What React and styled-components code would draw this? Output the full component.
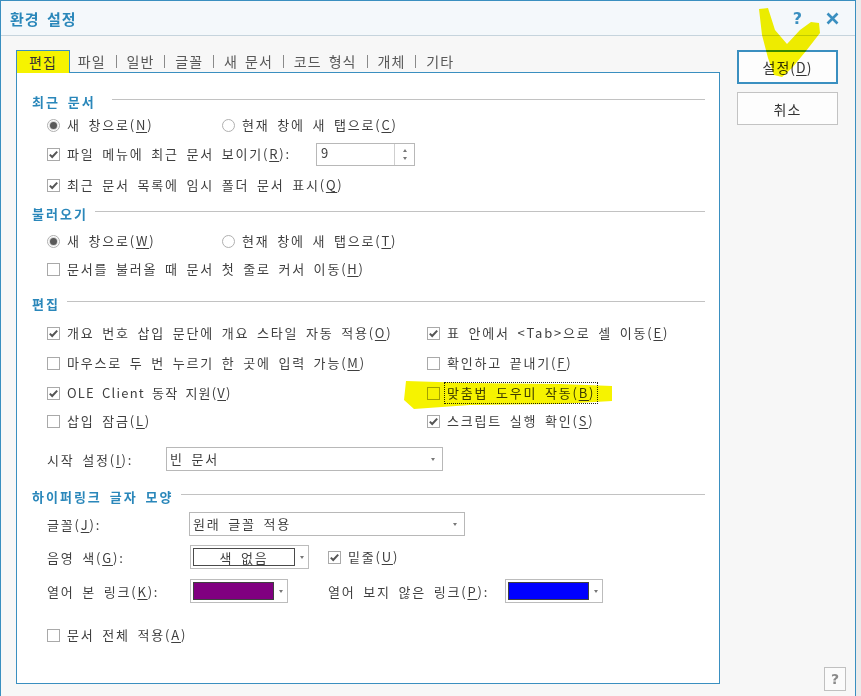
import React from 'react'
import styled, { createGlobalStyle } from 'styled-components'

const BLUE = '#3a8fc0'
const HEAD = '#2a87ba'
const TEXT = '#3f3f3f'

const GlobalStyle = createGlobalStyle`
  html, body { margin: 0; padding: 0; background: #ebebeb; }
  body { font-family: "Noto Sans CJK KR", "Noto Sans", sans-serif; }
  #root { width: 861px; height: 696px; overflow: hidden; }
  u { text-underline-offset: 2px; }
`

export default function App() {
    return (
        <>
            <GlobalStyle />
            <Dialog>
                <TitleBar>
                    <Title>환경 설정</Title>
                    <TitleIcons>
                        <HelpIcon>?</HelpIcon>
                        <svg width="13" height="13" viewBox="0 0 13 13">
                            <path d="M1.5 1.5 L11.5 11.5 M11.5 1.5 L1.5 11.5" stroke={BLUE} strokeWidth="2.6" />
                        </svg>
                    </TitleIcons>
                </TitleBar>
                <Main>
                    <LeftColumn>
                        <TabRow>
                            <SelectedTab>편집</SelectedTab>
                            <TabItem first>파일</TabItem><Sep />
                            <TabItem>일반</TabItem><Sep />
                            <TabItem>글꼴</TabItem><Sep />
                            <TabItem>새 문서</TabItem><Sep />
                            <TabItem>코드 형식</TabItem><Sep />
                            <TabItem>개체</TabItem><Sep />
                            <TabItem>기타</TabItem>
                        </TabRow>
                        <Panel>
                            <SectionHeader mt={0} gap={16}>최근 문서</SectionHeader>
                            <Row mt={0}>
                                <Option width={175}><Radio checked /><Label>새 창으로(<u>N</u>)</Label></Option>
                                <Option><Radio /><Label>현재 창에 새 탭으로(<u>C</u>)</Label></Option>
                            </Row>
                            <Row mt={5}>
                                <Option width={269}><Check checked /><Label>파일 메뉴에 최근 문서 보이기(<u>R</u>):</Label></Option>
                                <Spin>
                                    <SpinValue>9</SpinValue>
                                    <SpinButtons><ArrowUp /><ArrowDown /></SpinButtons>
                                </Spin>
                            </Row>
                            <Row mt={7}>
                                <Option><Check checked /><Label>최근 문서 목록에 임시 폴더 문서 표시(<u>Q</u>)</Label></Option>
                            </Row>

                            <SectionHeader mt={4}>불러오기</SectionHeader>
                            <Row mt={4}>
                                <Option width={175}><Radio checked /><Label>새 창으로(<u>W</u>)</Label></Option>
                                <Option><Radio /><Label>현재 창에 새 탭으로(<u>T</u>)</Label></Option>
                            </Row>
                            <Row mt={4}>
                                <Option><Check /><Label>문서를 불러올 때 문서 첫 줄로 커서 이동(<u>H</u>)</Label></Option>
                            </Row>

                            <SectionHeader mt={10}>편집</SectionHeader>
                            <Row mt={6}>
                                <Option width={380}><Check checked /><Label>개요 번호 삽입 문단에 개요 스타일 자동 적용(<u>O</u>)</Label></Option>
                                <Option><Check checked /><Label>표 안에서 &lt;Tab&gt;으로 셀 이동(<u>E</u>)</Label></Option>
                            </Row>
                            <Row mt={6}>
                                <Option width={380}><Check /><Label>마우스로 두 번 누르기 한 곳에 입력 가능(<u>M</u>)</Label></Option>
                                <Option><Check /><Label>확인하고 끝내기(<u>F</u>)</Label></Option>
                            </Row>
                            <Row mt={6}>
                                <Option width={380}><Check checked /><Label latin>OLE Client 동작 지원(<u>V</u>)</Label></Option>
                                <Option><Check /><Label focused>맞춤법 도우미 작동(<u>B</u>)</Label></Option>
                            </Row>
                            <Row mt={4}>
                                <Option width={380}><Check /><Label>삽입 잠금(<u>L</u>)</Label></Option>
                                <Option><Check checked /><Label>스크립트 실행 확인(<u>S</u>)</Label></Option>
                            </Row>
                            <Row mt={14}>
                                <FieldLabel width={119}>시작 설정(<u>I</u>):</FieldLabel>
                                <Select width={277}>빈 문서<SelectArrow /></Select>
                            </Row>

                            <SectionHeader mt={13}>하이퍼링크 글자 모양</SectionHeader>
                            <Row mt={4}>
                                <FieldLabel width={142}>글꼴(<u>J</u>):</FieldLabel>
                                <Select width={276}>원래 글꼴 적용<SelectArrow /></Select>
                            </Row>
                            <Row mt={9}>
                                <FieldGroup>
                                    <FieldLabel width={143}>음영 색(<u>G</u>):</FieldLabel>
                                    <ColorPicker width={119}>
                                        <NoColor>색 없음</NoColor>
                                        <PickerArrow><SelectArrow /></PickerArrow>
                                    </ColorPicker>
                                </FieldGroup>
                                <Option><Check checked /><Label>밑줄(<u>U</u>)</Label></Option>
                            </Row>
                            <Row mt={10}>
                                <FieldGroup>
                                    <FieldLabel width={143}>열어 본 링크(<u>K</u>):</FieldLabel>
                                    <ColorPicker width={98}>
                                        <Swatch color="#800080" />
                                        <PickerArrow><SelectArrow /></PickerArrow>
                                    </ColorPicker>
                                </FieldGroup>
                                <FieldLabel width={177}>열어 보지 않은 링크(<u>P</u>):</FieldLabel>
                                <ColorPicker width={98}>
                                    <Swatch color="#0000ff" />
                                    <PickerArrow><SelectArrow /></PickerArrow>
                                </ColorPicker>
                            </Row>
                            <Row mt={20}>
                                <Option><Check /><Label>문서 전체 적용(<u>A</u>)</Label></Option>
                            </Row>
                        </Panel>
                    </LeftColumn>
                    <RightColumn>
                        <Buttons>
                            <Button primary>설정(<u>D</u>)</Button>
                            <Button>취소</Button>
                        </Buttons>
                        <HelpButton>?</HelpButton>
                    </RightColumn>
                </Main>
                <Marks viewBox="0 0 856 696">
                    <polygon points="759,9 768,8 775,30 787,44 800,30 811,22 819,23 820,33 806,51 792,68 782,77 774,75 768,58 762,35" />
                    <polygon points="406,381 470,383 560,384 612,386 612,401 560,404 470,405 414,409 404,400" />
                </Marks>
            </Dialog>
        </>
    )
}

function Check({ checked }) {
    return (
        <Box>
            {checked && (
                <svg width="11" height="11" viewBox="0 0 11 11">
                    <path d="M1.8 5.6 L4.2 8 L9.2 2.6" stroke="#555" strokeWidth="2" fill="none" />
                </svg>
            )}
        </Box>
    )
}

function Radio({ checked }) {
    return <RadioCircle>{checked && <Dot />}</RadioCircle>
}

const Dialog = styled.div`
    position: relative;
    width: 856px;
    height: 697px;
    box-sizing: border-box;
    border: 1px solid ${BLUE};
    border-bottom: none;
    background: #f7f7f7;
    display: flex;
    flex-direction: column;
    color: ${TEXT};
`

const TitleBar = styled.div`
    height: 34px;
    flex-shrink: 0;
    display: flex;
    align-items: center;
    padding: 0 16px 0 9px;
    background: #f4f8fb;
    border-bottom: 1px solid #c6d4dd;
`

const Title = styled.div`
    font-size: 15px;
    font-weight: bold;
    color: ${HEAD};
    letter-spacing: 1px;
    word-spacing: 3px;
`

const TitleIcons = styled.div`
    margin-left: auto;
    display: flex;
    align-items: center;
    gap: 24px;
    padding-top: 1px;
`

const HelpIcon = styled.span`
    font-family: "DejaVu Sans", sans-serif;
    font-size: 16px;
    font-weight: bold;
    color: ${BLUE};
    line-height: 1;
`

const Main = styled.div`
    flex: 1;
    display: flex;
    gap: 17px;
    padding: 14px 0 6px 15px;
`

const LeftColumn = styled.div`
    width: 704px;
    display: flex;
    flex-direction: column;
    margin-bottom: 7px;
`

const TabRow = styled.div`
    height: 22px;
    display: flex;
    align-items: flex-start;
`

const SelectedTab = styled.div`
    position: relative;
    z-index: 1;
    height: 23px;
    box-sizing: border-box;
    padding: 0 12px;
    border: 1px solid ${BLUE};
    border-bottom: none;
    background: #f6f300;
    font-size: 14px;
    line-height: 22px;
    letter-spacing: 1px;
    color: #333;
`

const TabItem = styled.div`
    padding: 0 10px 0 ${p => (p.first ? 8 : 10)}px;
    font-size: 14px;
    line-height: 22px;
    letter-spacing: 1px;
    word-spacing: 3px;
    color: #585858;
`

const Sep = styled.div`
    width: 1px;
    height: 13px;
    margin-top: 5px;
    background: #8a8a8a;
`

const Panel = styled.div`
    flex: 1;
    background: #fff;
    border: 1px solid ${BLUE};
    padding: 16px 14px 0 15px;
    display: flex;
    flex-direction: column;
`

const SectionHeader = styled.div`
    display: flex;
    align-items: center;
    gap: ${p => p.gap || 7}px;
    height: 24px;
    margin-top: ${p => p.mt}px;
    font-size: 13px;
    font-weight: bold;
    letter-spacing: 2px;
    word-spacing: 3px;
    color: ${HEAD};

    &::after {
        content: "";
        flex: 1;
        height: 1px;
        margin-top: -3px;
        background: #c2c2c2;
    }
`

const Row = styled.div`
    display: flex;
    align-items: center;
    height: 24px;
    margin-top: ${p => p.mt}px;
    padding-left: 15px;
`

const Option = styled.div`
    display: flex;
    align-items: center;
    gap: 6px;
    width: ${p => (p.width ? `${p.width}px` : 'auto')};
    flex-shrink: 0;
`

const Label = styled.span`
    font-size: 13px;
    letter-spacing: ${p => (p.latin ? 1.2 : 1.8)}px;
    word-spacing: 3px;
    line-height: 18px;
    white-space: nowrap;
    padding: 0 1px;
    outline: ${p => (p.focused ? '1px dotted #222' : 'none')};
    outline-offset: 1px;
`

const Box = styled.span`
    width: 13px;
    height: 13px;
    box-sizing: border-box;
    border: 1px solid #a9a9a9;
    background: #fff;
    display: flex;
    align-items: center;
    justify-content: center;
    flex-shrink: 0;
`

const RadioCircle = styled.span`
    width: 13px;
    height: 13px;
    box-sizing: border-box;
    border: 1px solid #b0b0b0;
    border-radius: 50%;
    background: #fff;
    display: flex;
    align-items: center;
    justify-content: center;
    flex-shrink: 0;
`

const Dot = styled.span`
    width: 7px;
    height: 7px;
    border-radius: 50%;
    background: #5a5a5a;
    box-shadow: 0 0 0 1px #d8d8d8;
`

const Spin = styled.div`
    width: 99px;
    height: 23px;
    box-sizing: border-box;
    border: 1px solid #b8b8b8;
    background: #fff;
    display: flex;
`

const SpinValue = styled.div`
    flex: 1;
    padding: 1px 0 0 4px;
    font-size: 13px;
    line-height: 16px;
`

const SpinButtons = styled.div`
    width: 19px;
    border-left: 1px solid #cfcfcf;
    display: flex;
    flex-direction: column;
    align-items: center;
    justify-content: center;
    gap: 5px;
`

const ArrowUp = styled.span`
    width: 0;
    height: 0;
    border-left: 2.5px solid transparent;
    border-right: 2.5px solid transparent;
    border-bottom: 3px solid #777;
`

const ArrowDown = styled.span`
    width: 0;
    height: 0;
    border-left: 2.5px solid transparent;
    border-right: 2.5px solid transparent;
    border-top: 3px solid #777;
`

const SelectArrow = styled(ArrowDown)`
    position: absolute;
    right: 7px;
    top: 10px;
`

const FieldLabel = styled.span`
    width: ${p => p.width}px;
    flex-shrink: 0;
    font-size: 13px;
    letter-spacing: 1.8px;
    word-spacing: 3px;
    white-space: nowrap;
`

const FieldGroup = styled.div`
    width: 281px;
    display: flex;
    align-items: center;
    flex-shrink: 0;
`

const Select = styled.div`
    position: relative;
    width: ${p => p.width}px;
    height: 24px;
    box-sizing: border-box;
    border: 1px solid #b8b8b8;
    background: #fff;
    padding: 0 0 0 3px;
    font-size: 13px;
    letter-spacing: 1.8px;
    word-spacing: 3px;
    line-height: 22px;
`

const ColorPicker = styled.div`
    width: ${p => p.width}px;
    height: 24px;
    box-sizing: border-box;
    border: 1px solid #bcbcbc;
    background: #fff;
    padding: 2px 0 2px 2px;
    display: flex;
`

const NoColor = styled.div`
    flex: 1;
    border: 1px solid #4a4a4a;
    font-size: 13px;
    letter-spacing: 1.8px;
    word-spacing: 3px;
    line-height: 18px;
    text-align: center;
`

const Swatch = styled.div`
    flex: 1;
    background: ${p => p.color};
    border: 1px solid #404040;
`

const PickerArrow = styled.div`
    position: relative;
    width: 13px;
    flex-shrink: 0;

    & > span {
        right: 4px;
        top: 8px;
    }
`

const RightColumn = styled.div`
    width: 109px;
    display: flex;
    flex-direction: column;
    justify-content: space-between;
`

const Buttons = styled.div`
    display: flex;
    flex-direction: column;
    gap: 8px;
`

const Button = styled.div`
    width: 101px;
    height: ${p => (p.primary ? 34 : 33)}px;
    box-sizing: border-box;
    border: ${p => (p.primary ? `2px solid ${BLUE}` : '1px solid #c3c3c3')};
    background: #fdfdfd;
    display: flex;
    align-items: center;
    justify-content: center;
    font-size: 14px;
    letter-spacing: 1px;
    color: #333;
`

const HelpButton = styled.div`
    align-self: flex-end;
    width: 22px;
    height: 24px;
    box-sizing: border-box;
    border: 1px solid #c0c0c0;
    background: #fbfbfb;
    display: flex;
    align-items: center;
    justify-content: center;
    font-family: "DejaVu Sans", sans-serif;
    font-size: 14px;
    font-weight: bold;
    color: #8a8a8a;
`

const Marks = styled.svg`
    position: absolute;
    top: -1px;
    left: -1px;
    width: 856px;
    height: 696px;
    pointer-events: none;
    mix-blend-mode: multiply;
    fill: #f6f300;
`
